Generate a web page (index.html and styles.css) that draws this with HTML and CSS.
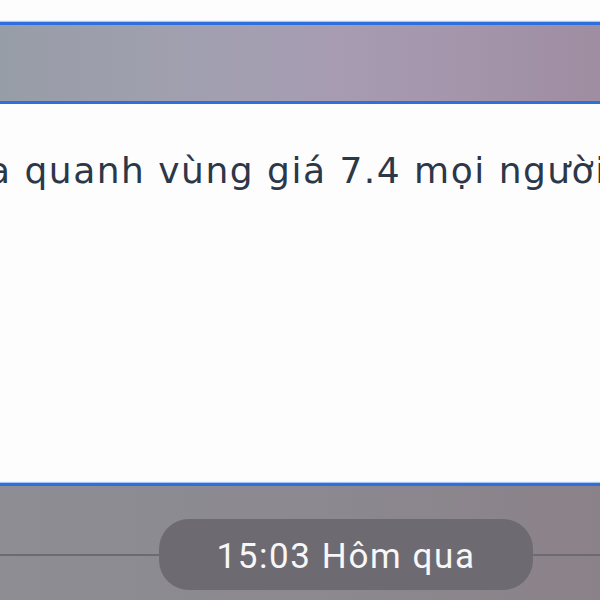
FILE: index.html
```html
<!DOCTYPE html>
<html lang="vi">

<head>
  <meta charset="UTF-8">
  <meta name="viewport" content="width=device-width, initial-scale=1.0">
  <title>Tin nhắn</title>
  <link rel="stylesheet" href="styles.css">
</head>

<body>

  <!-- top strip above the selection -->
  <div class="top-gap"></div>

  <!-- blurred chat header -->
  <div class="banner"></div>

  <!-- message text -->
  <div class="message">
    <p class="message-text">a quanh vùng giá 7.4 mọi người</p>
  </div>

  <!-- date separator -->
  <div class="footer">
    <div class="divider">
      <span class="divider-line divider-left"></span>
      <span class="time-pill">15:03 Hôm qua</span>
      <span class="divider-line"></span>
    </div>
  </div>

</body>

</html>
```

FILE: styles.css
```css
body {
  margin: 0;
  padding: 0;
  width: 600px;
  height: 600px;
  overflow: hidden;
  background-color: #fdfdfe;
  display: flex;
  flex-direction: column;
}

.top-gap {
  height: 22px;
  background-color: #fdfdfe;
}

.banner {
  height: 76px;
  border-top: 3px solid #2f6fdc;
  border-bottom: 3px solid #2f6fdc;
  background: linear-gradient(90deg, #979da7 0%, #a2a0b0 35%, #a79cb2 55%, #a495ab 78%, #9f8da1 100%);
  box-shadow: 0 -1px 1px #a9c8f5, 0 1px 1px #a9c8f5;
}

.message {
  height: 379px;
  background-color: #fdfdfe;
  overflow: hidden;
}

.message-text {
  margin: 0;
  padding-top: 43px;
  margin-left: -12px;
  white-space: nowrap;
  font-family: "DejaVu Sans", "Open Sans", sans-serif;
  font-size: 36px;
  letter-spacing: 1.5px;
  line-height: 48px;
  color: #2c3748;
}

.footer {
  flex: 1;
  border-top: 3px solid #2f6fdc;
  box-shadow: 0 -1px 1px #a9c8f5;
  background: linear-gradient(90deg, #8d8d93 0%, #8c8990 50%, #8b8189 100%);
  padding-top: 33px;
}

.divider {
  display: flex;
  align-items: center;
}

.divider-line {
  flex: 1;
  height: 2px;
  background-color: #6d6b72;
}

.divider-left {
  flex: 0 0 159px;
}

.time-pill {
  width: 374px;
  height: 67px;
  padding-top: 4px;
  border-radius: 30px;
  background-color: #6e6a71;
  color: #f7f7f8;
  font-family: Roboto, "Liberation Sans", sans-serif;
  font-size: 35px;
  letter-spacing: 1.6px;
  display: flex;
  align-items: center;
  justify-content: center;
}
```
